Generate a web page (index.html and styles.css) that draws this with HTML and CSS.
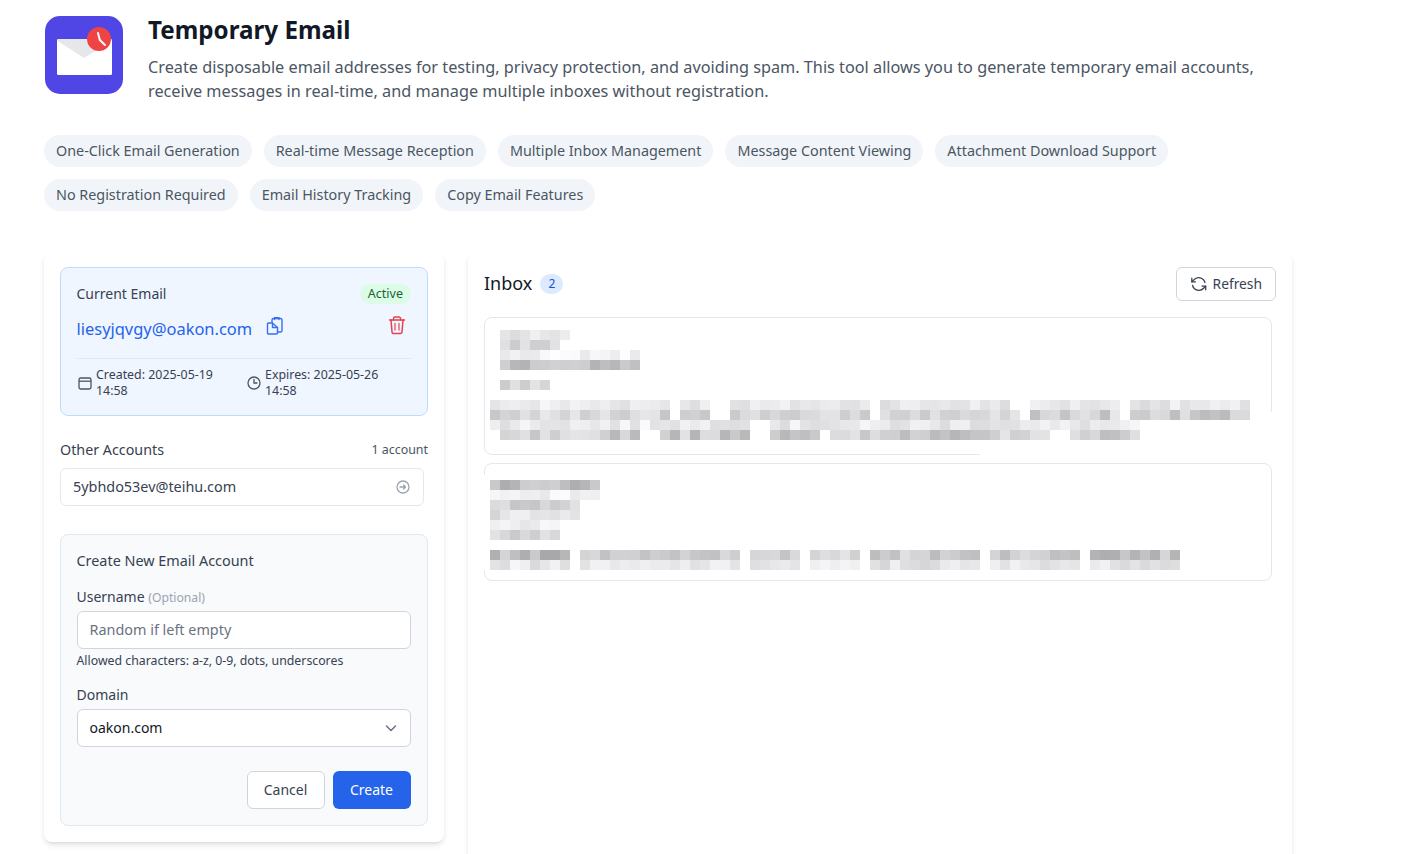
FILE: index.html
```html
<!DOCTYPE html>
<html lang="en">
<head>
<meta charset="utf-8">
<title>Temporary Email</title>
<link rel="stylesheet" href="styles.css">
</head>
<body>
<div class="page">
  <header class="hero">
    <svg class="logo" viewBox="0 0 78 78" width="78" height="78">
      <rect width="78" height="78" rx="15" fill="#4f46e5"/>
      <rect x="12" y="23" width="55" height="36" rx="1.5" fill="#fff"/>
      <path d="M12 24.5 Q12 23 14 23 H65 Q67 23 67 24.500 L39 42 Z" fill="#e5e7eb"/>
      <circle cx="54" cy="23" r="12" fill="#ef4444"/>
      <path d="M53 17 L54.800 24 L60 29" fill="none" stroke="#fff" stroke-width="2" stroke-linecap="round" stroke-linejoin="round"/>
    </svg>
    <div class="hero-text">
      <h1>Temporary Email</h1>
      <p>Create disposable email addresses for testing, privacy protection, and avoiding spam. This tool allows you to generate temporary email accounts, receive messages in real-time, and manage multiple inboxes without registration.</p>
    </div>
  </header>
  <ul class="chips">
    <li>One-Click Email Generation</li>
    <li>Real-time Message Reception</li>
    <li>Multiple Inbox Management</li>
    <li>Message Content Viewing</li>
    <li>Attachment Download Support</li>
    <li>No Registration Required</li>
    <li>Email History Tracking</li>
    <li>Copy Email Features</li>
  </ul>
  <main class="columns">
    <aside class="panel side">
      <section class="current">
        <div class="row-between">
          <span class="current-label">Current Email</span>
          <span class="active">Active</span>
        </div>
        <div class="address-row">
          <span class="address">liesyjqvgy@oakon.com</span>
          <svg class="copy" viewBox="0 0 18 20" width="18" height="20" fill="none" stroke="#3b6ff0" stroke-width="1.400" stroke-linejoin="round" stroke-linecap="round"><path d="M2.500 7H6.500L11.500 11.500V17a1 1 0 0 1-1 1H2.500a1 1 0 0 1-1-1V8a1 1 0 0 1 1-1Z"/><path d="M6.500 7v4.500h5"/><path d="M6 6V4a1.500 1.500 0 0 1 1.500-1.500H14.500A1.500 1.500 0 0 1 16 4V14.500a1.500 1.500 0 0 1-1.500 1.500H11.500"/><path d="M8.500 3.500V1.800H13V3.500"/></svg>
          <svg class="trash" viewBox="0 0 18 20" width="18" height="20" fill="none" stroke="#e5414b" stroke-width="1.500" stroke-linecap="round" stroke-linejoin="round"><path d="M1.500 5H16.500"/><path d="M5.500 5V3.500A1.500 1.500 0 0 1 7 2H11A1.500 1.500 0 0 1 12.500 3.500V5"/><path d="M3 5L4 17A1.500 1.500 0 0 0 5.500 18.500H12.500A1.500 1.500 0 0 0 14 17L15 5"/><path d="M7 8.500V15M11 8.500V15" stroke-width="1.600" stroke-opacity=".75"/></svg>
        </div>
        <div class="meta">
          <div class="meta-item">
            <svg viewBox="0 0 16 16" width="16" height="16" fill="none" stroke="#4b5563" stroke-width="1.300"><rect x="2" y="3" width="12" height="11" rx="1.800"/><path d="M2 6.200h12"/></svg>
            <span>Created: 2025-05-19 14:58</span>
          </div>
          <div class="meta-item">
            <svg viewBox="0 0 16 16" width="16" height="16" fill="none" stroke="#4b5563" stroke-width="1.300" stroke-linecap="round"><circle cx="8" cy="8" r="6"/><path d="M8 4.500V8h3"/></svg>
            <span>Expires: 2025-05-26 14:58</span>
          </div>
        </div>
      </section>
      <section class="others">
        <div class="row-between others-head">
          <span class="others-title">Other Accounts</span>
          <span class="others-count">1 account</span>
        </div>
        <div class="account">
          <span>5ybhdo53ev@teihu.com</span>
          <svg viewBox="0 0 16 16" width="16" height="16" fill="none" stroke="#9ca3af" stroke-width="1.300" stroke-linecap="round" stroke-linejoin="round"><circle cx="8" cy="8" r="6"/><path d="M5 8h5.500M8.500 6l2 2-2 2"/></svg>
        </div>
      </section>
      <form class="create">
        <div class="create-title">Create New Email Account</div>
        <label class="field-label">Username <span class="optional">(Optional)</span></label>
        <input class="control username" type="text" placeholder="Random if left empty">
        <div class="hint">Allowed characters: a-z, 0-9, dots, underscores</div>
        <label class="field-label domain-label">Domain</label>
        <div class="control select">
          <span>oakon.com</span>
          <svg viewBox="0 0 12 12" width="12" height="12" fill="none" stroke="#6b7280" stroke-width="1.500" stroke-linecap="round" stroke-linejoin="round"><path d="M1.500 4L6 8.500 10.500 4"/></svg>
        </div>
        <div class="actions">
          <button type="button" class="btn cancel">Cancel</button>
          <button type="button" class="btn primary">Create</button>
        </div>
      </form>
    </aside>
    <section class="panel inbox">
      <div class="row-between inbox-head">
        <div class="inbox-title"><h2>Inbox</h2><span class="count">2</span></div>
        <button type="button" class="btn refresh">
          <svg viewBox="0 0 24 24" width="18" height="18" fill="none" stroke="#374151" stroke-width="1.700" stroke-linecap="round" stroke-linejoin="round"><path d="M20.500 10A9 9 0 0 0 5 6.500L2.500 9"/><path d="M3.500 14A9 9 0 0 0 19 17.500L21.500 15"/><path d="M2.500 4v5h5"/><path d="M21.500 20v-5h-5"/></svg>
          Refresh
        </button>
      </div>
      <div class="mail mail-one"></div>
      <div class="mail mail-two"></div>
    </section>
  </main>
</div>
<div id="mosaic" class="mosaic"></div>
<script src="mosaic.js"></script>
</body>
</html>
```
FILE: styles.css
```css
* { box-sizing: border-box; }
html, body { margin: 0; height: 100%; overflow: hidden; background: #fff; }
body { font-family: "Noto Sans", "Liberation Sans", sans-serif; color: #111827; position: relative; }
.page { padding: 16px 0 0 44px; width: 1292px; }
.hero { display: flex; gap: 25px; margin-left: 1px; }
.logo { flex: none; }
.hero-text { margin-top: -2px; }
h1 { margin: 0; font-size: 24.200px; line-height: 32px; font-weight: 700; color: #111827; }
.hero-text p { margin: 9px 0 0; font-size: 16.250px; line-height: 24px; color: #4b5563; }
.chips { list-style: none; margin: 32px 0 0; padding: 0; display: flex; flex-wrap: wrap; gap: 12px; }
.chips li { height: 32px; padding: 0 12px; border-radius: 16px; background: #f1f5f9; color: #4b5563; font-size: 14.350px; line-height: 32px; }
.columns { display: flex; gap: 24px; margin-top: 40px; align-items: flex-start; }
.panel { background: #fff; border-radius: 8px; box-shadow: 0 4px 6px -1px rgba(0,0,0,.1), 0 2px 4px -2px rgba(0,0,0,.1); padding: 16px; }
.side { width: 400px; flex: none; }
.inbox { flex: 1; min-height: 640px; }
.row-between { display: flex; justify-content: space-between; align-items: center; }
.current { height: 149px; background: #eff6ff; border: 1px solid #bfdbfe; border-radius: 8px; padding: 14px 16px 15px 15.500px; }
.current-label { font-size: 14px; line-height: 24px; color: #374151; }
.active { height: 20px; padding: 0 8px; border-radius: 10px; background: #dcfce7; color: #166534; font-size: 12.500px; line-height: 20px; }
.address-row { display: flex; align-items: flex-start; margin-top: 9px; height: 27px; }
.address { font-size: 16.450px; line-height: 27px; color: #2563eb; }
.copy { margin: 1px 0 0 14px; }
.trash { margin: 0 5px 0 auto; }
.meta { display: grid; grid-template-columns: 169px 1fr; margin-top: 16px; padding-top: 8px; border-top: 1px solid #dbeafe; }
.meta-item { display: flex; align-items: center; gap: 3.500px; font-size: 12.400px; line-height: 16px; color: #374151; }
.meta-item svg { flex: none; }
.meta-item span { width: 125px; }
.others { margin-top: 23px; }
.others-head { height: 20px; }
.others-title { font-size: 14.300px; color: #374151; }
.others-count { font-size: 12.400px; color: #4b5563; }
.account { display: flex; justify-content: space-between; align-items: center; width: 364px; height: 38px; margin-top: 9px; padding: 0 12px; border: 1px solid #e5e7eb; border-radius: 6px; font-size: 14.400px; color: #374151; }
.account span { margin-bottom: 2px; }
.create { margin-top: 28px; height: 292px; background: #f8fafc; border: 1px solid #e2e8f0; border-radius: 8px; padding: 16px 15.500px; }
.create-title { font-size: 14.400px; line-height: 20px; color: #374151; }
.field-label { display: block; margin-top: 16px; font-size: 14px; line-height: 20px; color: #374151; }
.optional { font-size: 12.200px; color: #9ca3af; }
.control { display: block; width: 334px; height: 38px; margin-top: 4px; padding: 0 12px; border: 1px solid #d1d5db; border-radius: 6px; background: #fff; font: inherit; font-size: 14px; color: #111827; }
.username { margin-top: 3px; padding-bottom: 2px; font-size: 14.400px; }
.control::placeholder { color: #6b7280; opacity: 1; }
.hint { margin-top: 4px; font-size: 12.300px; line-height: 16px; color: #374151; }
.domain-label { margin-top: 16px; }
.select { display: flex; justify-content: space-between; align-items: center; }
.select span { margin-bottom: 2px; }
.select svg { margin-right: 1px; }
.actions { display: flex; justify-content: flex-end; gap: 8px; width: 334px; margin-top: 24px; }
.btn { height: 38px; border-radius: 6px; font: inherit; font-size: 14px; padding: 0 0 2px; border: 1px solid transparent; }
.cancel { width: 78px; background: #fff; border-color: #d1d5db; color: #374151; }
.primary { width: 78px; background: #2563eb; color: #fff; }
.inbox-head { height: 34px; }
.inbox-title { display: flex; align-items: center; gap: 8px; }
h2 { margin: 0 0 2px; font-size: 18px; line-height: 28px; font-weight: 400; color: #111827; }
.count { width: 23px; height: 20px; border-radius: 10px; background: #dbeafe; color: #1d4ed8; font-size: 12px; line-height: 20px; text-align: center; }
.refresh { display: flex; align-items: center; gap: 5px; width: 100px; height: 34px; padding: 0 13px 2px; background: #fff; border-color: #d1d5db; color: #374151; font-size: 13.800px; }
.refresh svg { margin-top: 2px; }
.mail { width: 788px; border: 1px solid #e5e7eb; border-radius: 8px; background: #fff; }
.mail-one { height: 138px; margin-top: 16px; }
.mail-two { height: 118px; margin-top: 8px; }
.mosaic { position: absolute; inset: 0; pointer-events: none; }
.cell { position: absolute; width: 10px; height: 10px; }
.smudge { position: absolute; background: #fff; }
```
FILE: mosaic.js
```js
// Pixelated (redacted) message text: each run is [y, x0, x1, base grey, spread]
var runs = [
  [330,500,570,226,14],[340,500,560,214,12],[350,500,640,244,12],[360,500,640,196,18],[380,500,550,212,20],
  [400,490,670,236,14],[400,680,710,232,12],[400,730,870,232,12],[400,880,1010,232,12],[400,1030,1120,232,10],[400,1130,1250,230,12],
  [410,490,670,212,22],[410,680,710,214,16],[410,730,870,214,16],[410,880,1020,214,16],[410,1030,1120,212,24],[410,1130,1250,206,22],
  [420,490,750,236,14],[420,770,1140,232,14],
  [430,500,640,206,24],[430,660,750,204,24],[430,770,820,204,22],[430,830,1050,206,24],[430,1070,1140,206,20],
  [480,490,600,194,22],[490,490,600,242,10],[500,490,580,210,16],[510,490,580,222,18],[520,490,560,238,10],[530,490,560,212,14],
  [550,490,570,190,24],[550,580,740,206,16],[550,750,800,204,14],[550,810,860,224,20],[550,870,980,206,20],[550,990,1080,206,20],[550,1090,1180,196,22],
  [560,490,570,232,14],[560,580,740,232,10],[560,750,800,230,10],[560,810,860,236,10],[560,870,980,226,16],[560,990,1080,232,12],[560,1090,1180,230,12]
];
// Areas where the redaction also wiped the card border
var smudges = [[484,475,6,95],[1252,412,28,46],[980,452,300,6]];
var host = document.getElementById('mosaic');
var seed = 7;
function next() { seed = (seed * 1103515245 + 12345) & 0x7fffffff; return seed / 0x7fffffff; }
smudges.forEach(function (s) {
  var d = document.createElement('div');
  d.className = 'smudge';
  d.style.cssText = 'left:' + s[0] + 'px;top:' + s[1] + 'px;width:' + s[2] + 'px;height:' + s[3] + 'px';
  host.appendChild(d);
});
runs.forEach(function (r) {
  for (var x = r[1]; x < r[2]; x += 10) {
    var g = Math.round(r[3] + (next() - 0.5) * 2 * r[4]);
    g = Math.min(254, g);
    var d = document.createElement('div');
    d.className = 'cell';
    d.style.cssText = 'left:' + x + 'px;top:' + r[0] + 'px;background:rgb(' + g + ',' + g + ',' + Math.min(255, g + 2) + ')';
    host.appendChild(d);
  }
});
```
